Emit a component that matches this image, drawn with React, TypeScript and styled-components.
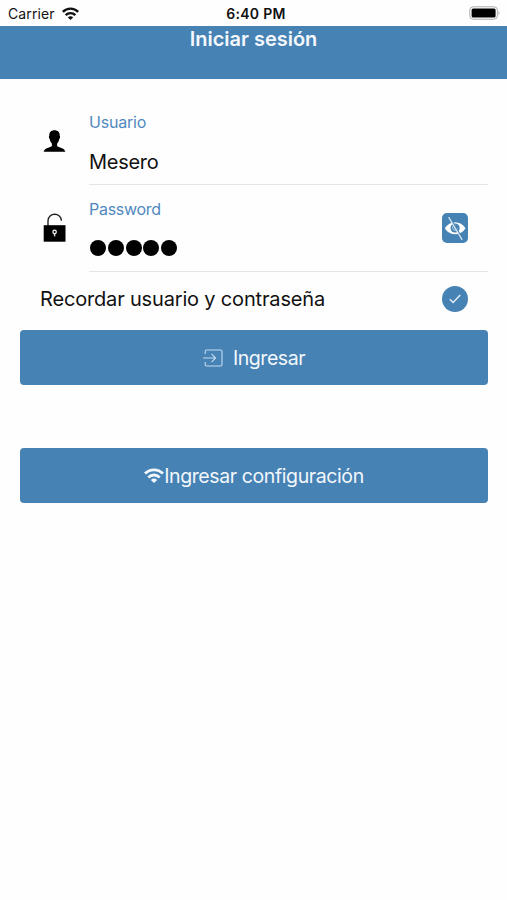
import React from "react";
import styled, { createGlobalStyle } from "styled-components";

const BLUE = "#4682b4";

const GlobalStyle = createGlobalStyle`
  * { box-sizing: border-box; }
  body { margin: 0; background: #fff; font-family: Inter, "Liberation Sans", sans-serif; color: #111; }
`;

const Screen = styled.main`
  width: 507px;
  height: 900px;
  overflow: hidden;
  background: #fefefe;
`;

const StatusBar = styled.div`
  display: grid;
  grid-template-columns: 1fr auto 1fr;
  align-items: center;
  height: 26px;
  padding: 2px 6px 0 8px;
  line-height: 18px;
`;

const Carrier = styled.div`
  display: flex;
  align-items: center;
  gap: 7px;
  font-size: 14px;
  letter-spacing: 0.12px;
  svg { margin-top: -2px; }
`;

const Clock = styled.div`
  font-size: 14px;
  font-weight: 600;
  letter-spacing: 0.3px;
  padding-left: 3px;
`;

const BatteryBox = styled.div`
  display: flex;
  justify-content: flex-end;
  margin-top: -2px;
`;

const Header = styled.header`
  height: 53px;
  background: ${BLUE};
  text-align: center;
`;

const Title = styled.h1`
  margin: 0;
  font-size: 20px;
  line-height: 27px;
  font-weight: 600;
  letter-spacing: -0.02px;
  color: #f4f8fc;
`;

const Form = styled.form`
  display: flex;
  flex-direction: column;
  padding: 0 19px 0 20px;
`;

const FieldRow = styled.div<{ $height: number }>`
  display: grid;
  grid-template-columns: 69px 1fr;
  height: ${(p) => p.$height}px;
`;

const IconCell = styled.div<{ $top: number }>`
  padding: ${(p) => p.$top}px 0 0 22.5px;
  svg { display: block; }
`;

const FieldBody = styled.div<{ $top: number }>`
  display: flex;
  justify-content: space-between;
  padding: ${(p) => p.$top}px 20px 0 0;
  border-bottom: 1px solid #e4e4e6;
`;

const Label = styled.div<{ $spacing: number }>`
  font-size: 16px;
  line-height: 20px;
  letter-spacing: ${(p) => p.$spacing}px;
  color: #5189bf;
`;

const Value = styled.div`
  margin-top: 17px;
  font-size: 20px;
  line-height: 26px;
  letter-spacing: -0.3px;
`;

const Dots = styled.div`
  display: flex;
  gap: 1.8px;
  margin: 21px 0 0 1px;
`;

const Dot = styled.span`
  width: 16px;
  height: 16px;
  border-radius: 50%;
  background: #000;
`;

const EyeButton = styled.button`
  width: 26px;
  height: 30px;
  margin-top: 14px;
  padding: 0;
  border: 0;
  border-radius: 5px;
  background: ${BLUE};
  svg { display: block; }
`;

const RememberRow = styled.label`
  display: flex;
  justify-content: space-between;
  align-items: center;
  height: 54px;
  padding: 0 20px;
  font-size: 20px;
  letter-spacing: -0.17px;
`;

const Check = styled.span`
  display: flex;
  align-items: center;
  justify-content: center;
  width: 26px;
  height: 26px;
  border-radius: 50%;
  background: ${BLUE};
`;

const ActionButton = styled.button<{ $gap: number; $top: number; $spacing: number }>`
  display: flex;
  align-items: center;
  justify-content: center;
  gap: ${(p) => p.$gap}px;
  height: 55px;
  margin: ${(p) => p.$top}px 0 0;
  padding: 0;
  border: 0;
  border-radius: 4px;
  background: ${BLUE};
  color: #f2f7fb;
  font: 400 19.5px/26px Inter, "Liberation Sans", sans-serif;
  letter-spacing: ${(p) => p.$spacing}px;
`;

const Wifi = ({ width, height }: { width: number; height: number }) => (
  <svg width={width} height={height} viewBox="0 0 20 15" fill="none" stroke="currentColor" strokeWidth="2.8">
    <path d="M1 5.6C6 .5 14 .5 19 5.6" />
    <path d="M4.3 9.4C7.5 6.2 12.5 6.2 15.7 9.4" />
    <path d="M10 15L6.8 11.9Q10 9.3 13.2 11.9Z" fill="currentColor" stroke="none" />
  </svg>
);

const Battery = () => (
  <svg width="32" height="14" viewBox="0 0 32 14">
    <rect x=".8" y=".8" width="27.6" height="12.4" rx="3.4" fill="#fff" stroke="#aaa" strokeWidth="1" />
    <rect x="2.6" y="2.5" width="24" height="9" rx="1.6" fill="#000" />
    <path d="M29.7 4.8Q31.5 7 29.7 9.2Z" fill="#999" />
  </svg>
);

const Person = () => (
  <svg width="23" height="23" viewBox="0 0 23 23">
    <path
      d="M11.5.3C15 .3 17 2.4 16.7 5.8C17.3 6.2 17.2 8.2 16.3 9.1C15.9 11.3 15 12.8 14.1 13.7V16C15.5 17.9 21.4 17.5 22.4 21.8H.6C1.6 17.5 7.5 17.9 8.9 16V13.7C8 12.8 7.1 11.3 6.7 9.1C5.8 8.2 5.7 6.2 6.3 5.8C6 2.4 8 .3 11.5.3Z"
      fill="#000"
    />
  </svg>
);

const Lock = () => (
  <svg width="24" height="30" viewBox="0 0 24 30">
    <path d="M5 13V7.8C5-.9 18.4-.9 18.4 7.8" fill="none" stroke="#222" strokeWidth="1.4" />
    <rect x=".7" y="12.2" width="21.8" height="16.5" fill="#000" />
    <circle cx="11.6" cy="18.9" r="1.7" fill="none" stroke="#fff" strokeWidth="1.2" />
    <path d="M11.6 20.5V23.3" stroke="#ddd" strokeWidth="1.5" />
  </svg>
);

const EyeOff = () => (
  <svg width="26" height="30" viewBox="0 0 26 30">
    <path d="M2.8 15.2C7.5 7.2 18.8 7.2 23.5 15.2C18.8 23.2 7.5 23.2 2.8 15.2Z" fill="#fff" />
    <circle cx="13.1" cy="15" r="4.6" fill={BLUE} />
    <path d="M13.6 12C10.8 12 10 15 11 16.2C12 17.9 15 17.6 15.4 15.5H13V13.3" fill="none" stroke="#b9d3e8" strokeWidth="1" />
    <path d="M7.6 4.1L21.2 26.8" stroke={BLUE} strokeWidth="1.5" />
    <path d="M6.6 4.1L20.2 26.8" stroke="#d2e3f1" strokeWidth="1.3" />
  </svg>
);

const Enter = () => (
  <svg width="20" height="18" viewBox="0 0 20 18" fill="none" stroke="#c4dcf0" strokeWidth="1.1">
    <path d="M2.2 5V2.5Q2.2 1 3.7 1H17.5Q19 1 19 2.5V15.5Q19 17 17.5 17H3.7Q2.2 17 2.2 15.5V13" />
    <path d="M.2 9H12.4M8.6 4.8L12.6 9L8.6 13.2" />
  </svg>
);

export default function App() {
  return (
    <Screen>
      <GlobalStyle />
      <StatusBar>
        <Carrier>
          Carrier
          <Wifi width={17} height={13} />
        </Carrier>
        <Clock>6:40 PM</Clock>
        <BatteryBox>
          <Battery />
        </BatteryBox>
      </StatusBar>
      <Header>
        <Title>Iniciar sesión</Title>
      </Header>
      <Form>
        <FieldRow $height={106}>
          <IconCell $top={51}>
            <Person />
          </IconCell>
          <FieldBody $top={33}>
            <div>
              <Label $spacing={-0.2}>Usuario</Label>
              <Value>Mesero</Value>
            </div>
          </FieldBody>
        </FieldRow>
        <FieldRow $height={87}>
          <IconCell $top={28}>
            <Lock />
          </IconCell>
          <FieldBody $top={14}>
            <div>
              <Label $spacing={-0.28}>Password</Label>
              <Dots>
                {[0, 1, 2, 3, 4].map((n) => (
                  <Dot key={n} />
                ))}
              </Dots>
            </div>
            <EyeButton type="button" aria-label="Mostrar">
              <EyeOff />
            </EyeButton>
          </FieldBody>
        </FieldRow>
        <RememberRow>
          Recordar usuario y contraseña
          <Check>
            <svg width="12" height="10" viewBox="0 0 12 10" fill="none" stroke="#e6f0f8" strokeWidth="1.4">
              <path d="M.8 5.2L4.1 8.6L11.2 1" />
            </svg>
          </Check>
        </RememberRow>
        <ActionButton type="button" $gap={10} $top={4} $spacing={-0.45}>
          <Enter />
          Ingresar
        </ActionButton>
        <ActionButton type="button" $gap={0} $top={63} $spacing={-0.4}>
          <Wifi width={20} height={15} />
          Ingresar configuración
        </ActionButton>
      </Form>
    </Screen>
  );
}
